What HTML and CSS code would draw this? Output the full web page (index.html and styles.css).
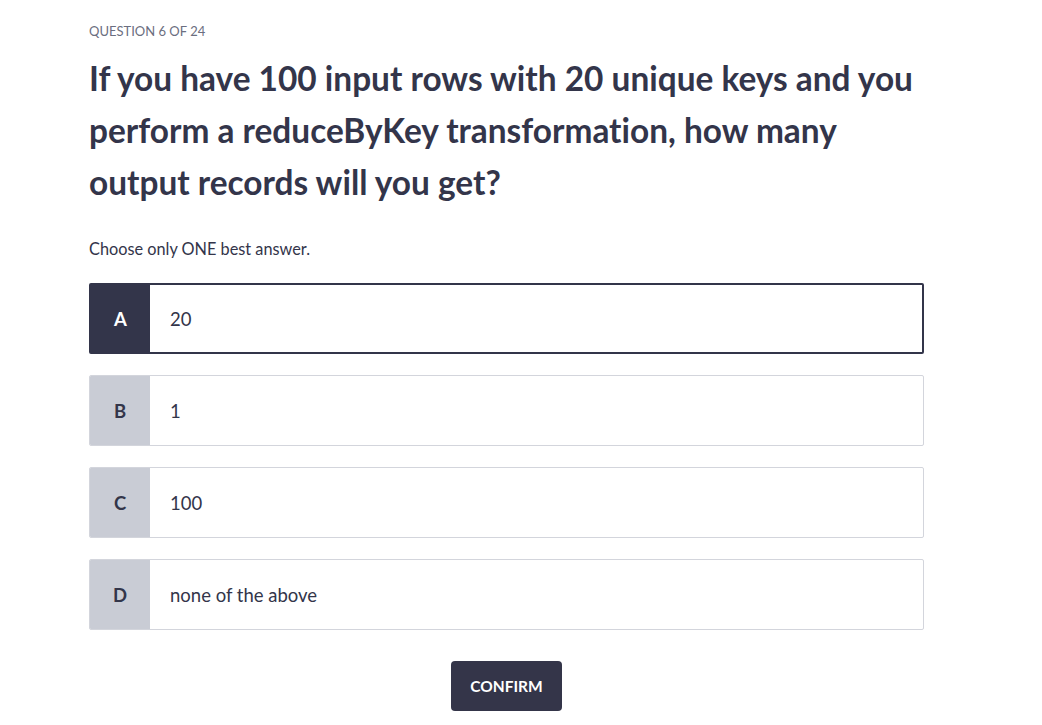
FILE: index.html
```html
<!DOCTYPE html>
<html>
<head>
<meta charset="utf-8">
<link rel="stylesheet" href="styles.css">
</head>
<body>
<main class="quiz">
  <div class="counter">QUESTION 6 OF 24</div>
  <h1 class="question">If you have 100 input rows with 20 unique keys and you perform a reduceByKey transformation, how many output records will you get?</h1>
  <p class="hint">Choose only ONE best answer.</p>
  <div class="options">
    <div class="option selected"><span class="letter">A</span><span class="text">20</span></div>
    <div class="option"><span class="letter">B</span><span class="text">1</span></div>
    <div class="option"><span class="letter">C</span><span class="text">100</span></div>
    <div class="option"><span class="letter">D</span><span class="text">none of the above</span></div>
  </div>
  <div class="actions"><button class="confirm">CONFIRM</button></div>
</main>
</body>
</html>
```
FILE: styles.css
```css
* { box-sizing: border-box; }
body {
  margin: 0;
  background: #ffffff;
  font-family: Lato, "Noto Sans", sans-serif;
  font-variant-ligatures: none;
  color: #33354a;
}
.quiz {
  width: 835px;
  margin-left: 89px;
  padding-top: 22px;
}
.counter {
  font-size: 13px;
  line-height: 18px;
  color: #6b6e80;
}
.question {
  margin: 12px 0 0;
  font-size: 33.4px;
  line-height: 52px;
  font-weight: 700;
  color: #33354a;
}
.hint {
  margin: 31px 0 0;
  font-size: 16.3px;
  line-height: 20px;
  color: #33354a;
}
.options {
  margin-top: 24px;
  display: flex;
  flex-direction: column;
  gap: 21px;
}
.option {
  display: flex;
  height: 71px;
  border: 1px solid #d3d5dc;
  border-radius: 2px;
  overflow: hidden;
  background: #fff;
}
.option.selected {
  border: 2px solid #33354a;
}
.letter {
  width: 60px;
  flex: none;
  display: flex;
  align-items: center;
  justify-content: center;
  background: #c9ccd5;
  font-weight: 700;
  font-size: 18.5px;
  color: #33354a;
}
.option.selected .letter {
  background: #33354a;
  color: #fff;
  width: 59px;
}
.text {
  display: flex;
  align-items: center;
  padding-left: 20px;
  font-size: 18.5px;
  color: #33354a;
}
.actions {
  display: flex;
  justify-content: center;
  margin-top: 31px;
}
.confirm {
  width: 111px;
  height: 50px;
  border: none;
  border-radius: 4px;
  background: #343549;
  color: #fff;
  font-family: Lato, "Noto Sans", sans-serif;
  font-weight: 700;
  font-size: 15.5px;
}
```
